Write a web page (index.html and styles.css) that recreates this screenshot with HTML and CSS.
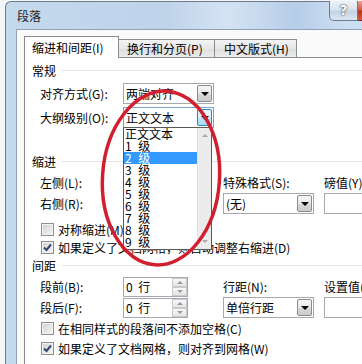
FILE: index.html
```html
<!DOCTYPE html>
<html lang="zh-CN">
<head>
<meta charset="UTF-8" />
<title>段落</title>
<link rel="stylesheet" href="styles.css">
</head>
<body>
<div class="screen">
  <div class="window">
    <div class="titlebar">
      <span class="title">段落</span>
      <div class="caption">
        <div class="help">?</div>
        <div class="close"></div>
      </div>
    </div>
    <div class="frame">
      <div class="client">
        <div class="tabs">
          <div class="tab active">缩进和间距(I)</div>
          <div class="tab second">换行和分页(P)</div>
          <div class="tab third">中文版式(H)</div>
        </div>
        <div class="page">
          <div class="group-title"><span>常规</span><i></i></div>
          <div class="field first">
            <span class="lbl">对齐方式(G):</span>
            <div class="combo"><span>两端对齐</span><b class="drop"></b></div>
          </div>
          <div class="field second">
            <span class="lbl">大纲级别(O):</span>
            <div class="combo focused"><span>正文文本</span><b class="drop hot"></b></div>
          </div>

          <div class="group-title indent"><span>缩进</span><i></i></div>
          <div class="grid indent-grid">
            <span>左侧(L):</span>
            <div class="spin"><span></span><div class="spin-btns"><b class="up"></b><b class="down"></b></div></div>
            <span>特殊格式(S):</span>
            <span>磅值(Y):</span>
            <span>右侧(R):</span>
            <div class="spin"><span></span><div class="spin-btns"><b class="up"></b><b class="down"></b></div></div>
            <div class="combo narrow"><span>(无)</span><b class="drop"></b></div>
            <div class="textbox"></div>
          </div>
          <div class="check sym"><span class="box"></span>对称缩进(M)</div>
          <div class="check tight"><span class="box on"><svg viewBox="0 0 11 11"><path d="M2 5.5 L4.5 8 L9 2.5" /></svg></span>如果定义了文档网格，则自动调整右缩进(D)</div>

          <div class="group-title spacing"><span>间距</span><i></i></div>
          <div class="grid spacing-grid">
            <span>段前(B):</span>
            <div class="spin"><span>0 行</span><div class="spin-btns"><b class="up"></b><b class="down"></b></div></div>
            <span>行距(N):</span>
            <span>设置值(A):</span>
            <span>段后(F):</span>
            <div class="spin"><span>0 行</span><div class="spin-btns"><b class="up"></b><b class="down"></b></div></div>
            <div class="combo narrow"><span>单倍行距</span><b class="drop"></b></div>
            <div class="textbox"></div>
          </div>
          <div class="check tight"><span class="box"></span>在相同样式的段落间不添加空格(C)</div>
          <div class="check last"><span class="box on"><svg viewBox="0 0 11 11"><path d="M2 5.5 L4.5 8 L9 2.5" /></svg></span>如果定义了文档网格，则对齐到网格(W)</div>
        </div>
      </div>
    </div>
  </div>

  <div class="dropdown">
    <ul class="options">
      <li>正文文本</li>
      <li>1 级</li>
      <li class="sel">2 级</li>
      <li>3 级</li>
      <li>4 级</li>
      <li>5 级</li>
      <li>6 级</li>
      <li>7 级</li>
      <li>8 级</li>
      <li>9 级</li>
    </ul>
    <div class="vscroll"><span class="arrow up"></span><span class="arrow down"></span></div>
  </div>

  <svg class="mark" width="362" height="364" viewBox="0 0 362 364">
    <ellipse cx="161" cy="178" rx="58.5" ry="87" transform="rotate(4 161 178)" />
  </svg>
</div>
</body>
</html>
```

FILE: styles.css
```css
* {
  box-sizing: border-box;
}
body {
  margin: 0;
  width: 362px;
  height: 364px;
  overflow: hidden;
  font-family: "Noto Sans CJK SC", "Liberation Sans", sans-serif;
  font-size: 12px;
  color: #000;
}
.screen {
  position: relative;
  width: 362px;
  height: 364px;
  overflow: hidden;
  background: #f3f5f8;
}
.window {
  margin: 1px 0 0 5px;
  width: 402px;
  height: 420px;
  border-left: 1px solid #6d7b8d;
  border-top: 1px solid #6d7b8d;
  border-top-left-radius: 6px;
  background: linear-gradient(90deg, #c4d8ee 0%, #bed3ea 40%, #d4e3f3 55%, #c9dbef 62%, #b6cde8 72%, #cddff1 85%, #c2d6ec 100%);
}
.titlebar {
  height: 27px;
  display: flex;
  padding-left: 11px;
  padding-right: 6px;
}
.title {
  align-self: center;
  color: #1e1e1e;
}
.caption {
  margin-left: auto;
  display: flex;
  margin-top: -1px;
}
.help {
  width: 29px;
  height: 20px;
  border: 1px solid #6c7c90;
  border-top: none;
  border-bottom-left-radius: 5px;
  background: linear-gradient(#eef3f9, #d6e2ee 48%, #c2d2e4 52%, #dbe7f3);
  color: #fff;
  font: bold 14px "DejaVu Sans", sans-serif;
  line-height: 19px;
  text-align: center;
  text-shadow: 0 0 1px #3a4450, 0 0 2px #3a4450;
}
.close {
  width: 43px;
  height: 20px;
  border: 1px solid #6b2a1f;
  border-top: none;
  border-left: none;
  border-bottom-right-radius: 5px;
  background: linear-gradient(#e8a493, #c75b48 48%, #b8301a 52%, #d0603e);
}
.frame {
  padding-left: 10px;
}
.client {
  border-left: 1px solid #8ea2ba;
  border-top: 1px solid #8ea2ba;
  background: #fafafa;
  padding: 6px 0 0 7px;
  height: 400px;
}
.tabs {
  display: flex;
  align-items: flex-end;
  height: 21px;
  position: relative;
  z-index: 1;
}
.tab {
  height: 18px;
  line-height: 17px;
  border: 1px solid #898c95;
  border-bottom: none;
  background: linear-gradient(#f4f4f4, #e6e6e6 50%, #dedede 51%, #ebebeb);
  white-space: nowrap;
}
.tab.active {
  width: 95px;
  height: 22px;
  margin-bottom: -1px;
  line-height: 21px;
  padding-left: 7px;
  background: #fff;
}
.tab.second {
  width: 96px;
  border-left: none;
  padding-left: 8px;
}
.tab.third {
  width: 82px;
  border-left: none;
  padding-left: 9px;
}
.page {
  border-top: 1px solid #898c95;
  border-left: 1px solid #898c95;
  background: #fff;
  padding-left: 7px;
  height: 360px;
}
.group-title {
  display: flex;
  align-items: center;
  gap: 6px;
  height: 14px;
  margin-top: 5px;
}
.group-title i {
  flex: 1;
  border-top: 1px solid #dde3ea;
}
.group-title.indent {
  margin-top: 26px;
}
.group-title.spacing {
  margin-top: 3px;
}
.field {
  display: flex;
  align-items: center;
  height: 21px;
  padding-left: 8px;
}
.field.first {
  margin-top: 6px;
}
.field.second {
  margin-top: 3px;
}
.lbl {
  width: 83px;
}
.combo {
  width: 91px;
  height: 21px;
  border: 1px solid #a5a8ae;
  background: #fff;
  display: flex;
  align-items: center;
  padding-left: 2px;
}
.combo span {
  flex: 1;
  white-space: nowrap;
}
.combo.focused {
  border-color: #7da2ce;
}
.combo.narrow {
  width: 91px;
}
.drop {
  width: 15px;
  height: 17px;
  margin-right: 1px;
  border: 1px solid #8a8a8a;
  border-radius: 2px;
  background: linear-gradient(#f6f6f6, #e8e8e8 50%, #d8d8d8 51%, #cdcdcd);
  display: flex;
  align-items: center;
  justify-content: center;
}
.drop::after {
  content: "";
  border-left: 4px solid transparent;
  border-right: 4px solid transparent;
  border-top: 4px solid #000;
}
.drop.hot {
  border-color: #3c7fb1;
  background: linear-gradient(#eaf6fd, #d9f0fc 50%, #bee6fd 51%, #a7d9f5);
}
.grid {
  display: grid;
  grid-template-columns: 83px 100px 101px 1fr;
  grid-template-rows: 21px 21px;
  align-items: center;
  padding-left: 8px;
  margin-top: 4px;
  white-space: nowrap;
}
.spin {
  width: 65px;
  height: 20px;
  border: 1px solid #a5a8ae;
  background: #fff;
  display: flex;
  align-items: center;
  padding-left: 2px;
}
.spin span {
  flex: 1;
  word-spacing: 3px;
}
.spin-btns {
  width: 15px;
  height: 18px;
  display: flex;
  flex-direction: column;
}
.spin-btns b {
  flex: 1;
  border: 1px solid #c9cbd0;
  background: linear-gradient(#f8f8f8, #e4e4e4);
  display: flex;
  align-items: center;
  justify-content: center;
}
.spin-btns b.up::after {
  content: "";
  border-left: 3px solid transparent;
  border-right: 3px solid transparent;
  border-bottom: 3px solid #9a9a9a;
}
.spin-btns b.down::after {
  content: "";
  border-left: 3px solid transparent;
  border-right: 3px solid transparent;
  border-top: 3px solid #9a9a9a;
}
.textbox {
  width: 60px;
  height: 21px;
  border: 1px solid #a5a8ae;
  background: #fff;
}
.check {
  display: flex;
  align-items: center;
  gap: 4px;
  height: 16px;
  padding-left: 9px;
  white-space: nowrap;
}
.check.sym {
  margin-top: 7px;
}
.check.tight {
  margin-top: 2px;
}
.check.last {
  margin-top: 4px;
}
.box {
  width: 13px;
  height: 13px;
  border: 1px solid #8e8f8f;
  background: linear-gradient(135deg, #cfcfcf, #f7f7f7);
  box-shadow: inset 0 0 0 1px #f2f2f2;
  display: flex;
}
.box svg {
  width: 11px;
  height: 11px;
}
.box path {
  fill: none;
  stroke: #34466a;
  stroke-width: 2;
}
.dropdown {
  position: absolute;
  left: 123px;
  top: 127px;
  width: 89px;
  height: 123px;
  border: 1px solid #5a5a5a;
  background: #fff;
  display: flex;
  overflow: hidden;
}
.options {
  flex: 1;
  margin: 0;
  padding: 0;
  list-style: none;
}
.options li {
  height: 12px;
  line-height: 12px;
  padding-left: 1px;
  white-space: nowrap;
  word-spacing: 4px;
}
.options li.sel {
  background: #3399ff;
  color: #fff;
}
.vscroll {
  width: 14px;
  background: #ececec;
  border-left: 1px solid #e2e2e2;
  display: flex;
  flex-direction: column;
  justify-content: space-between;
  align-items: center;
  padding: 6px 0;
}
.arrow {
  border-left: 3px solid transparent;
  border-right: 3px solid transparent;
}
.arrow.up {
  border-bottom: 3px solid #a8a8a8;
}
.arrow.down {
  border-top: 3px solid #a8a8a8;
}
.mark {
  position: absolute;
  left: 0;
  top: 0;
  pointer-events: none;
}
.mark ellipse {
  fill: none;
  stroke: #d21f2f;
  stroke-width: 3.5;
}
```
